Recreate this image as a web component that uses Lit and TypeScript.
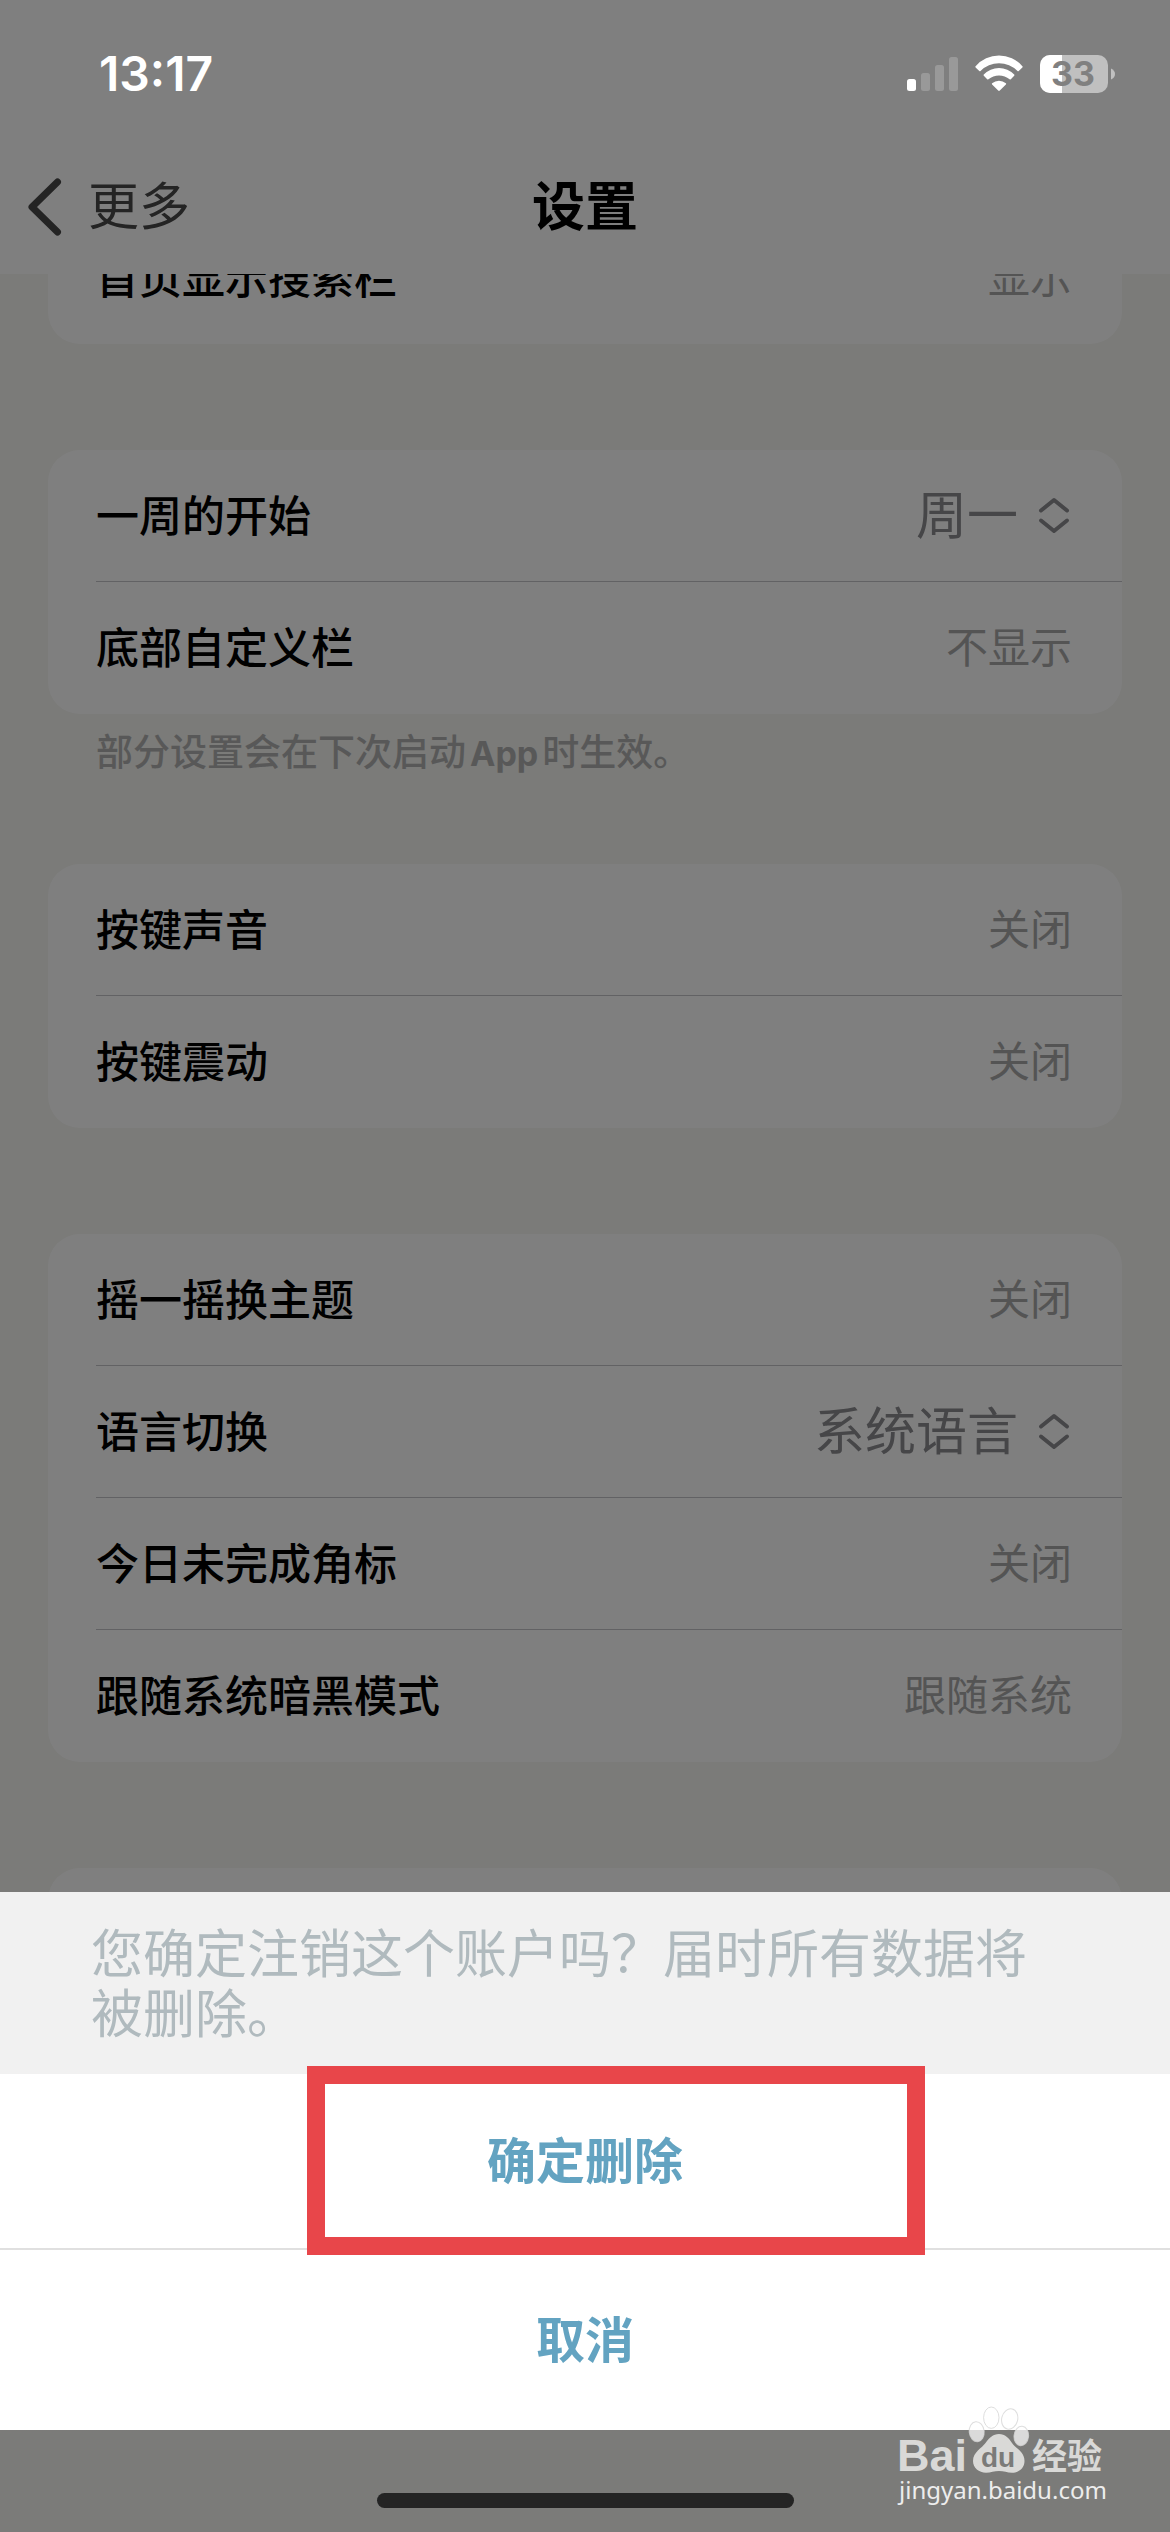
import { LitElement, html, css, svg, nothing } from "lit";
import { customElement, property } from "lit/decorators.js";

interface SettingRow {
  id: string;
  label: string;
  value: string;
  options?: string[];
}

interface SettingGroup {
  rows: SettingRow[];
  note?: boolean;
}

const groups: SettingGroup[] = [
  { rows: [{ id: "search", label: "首页显示搜索栏", value: "显示" }] },
  {
    rows: [
      { id: "week", label: "一周的开始", value: "周一", options: ["周一", "周日"] },
      { id: "bottom", label: "底部自定义栏", value: "不显示" },
    ],
    note: true,
  },
  {
    rows: [
      { id: "sound", label: "按键声音", value: "关闭" },
      { id: "haptic", label: "按键震动", value: "关闭" },
    ],
  },
  {
    rows: [
      { id: "shake", label: "摇一摇换主题", value: "关闭" },
      { id: "lang", label: "语言切换", value: "系统语言", options: ["系统语言"] },
      { id: "badge", label: "今日未完成角标", value: "关闭" },
      { id: "dark", label: "跟随系统暗黑模式", value: "跟随系统" },
    ],
  },
];

const fontStack = css`"Inter", "Noto Sans CJK SC", sans-serif`;

@customElement("status-bar")
export class StatusBar extends LitElement {
  static styles = css`
    :host {
      display: flex;
      align-items: center;
      justify-content: space-between;
      height: 148px;
      padding: 0 54px 0 99px;
      color: #fff;
    }
    .time {
      font: 600 48px/56px ${fontStack};
    }
    .icons {
      display: flex;
      align-items: center;
      gap: 17px;
    }
    svg {
      display: block;
      overflow: visible;
    }
    .level {
      font: 700 34px ${fontStack};
      fill: #808080;
    }
  `;

  render() {
    return html`
      <span class="time">13:17</span>
      <span class="icons">
        <svg width="51" height="34" viewBox="0 0 51 34" fill="#fff" aria-hidden="true">
          <rect x="0" y="22" width="9" height="12" rx="2.5" />
          <g opacity="0.2">
            <rect x="14" y="16" width="9" height="18" rx="2.5" />
            <rect x="28" y="8" width="9" height="26" rx="2.5" />
            <rect x="42" y="0" width="9" height="34" rx="2.5" />
          </g>
        </svg>
        <svg width="48" height="38" viewBox="0 0 48 38" fill="#fff" aria-hidden="true">
          <path d="M.6 11.2A31 31 0 0 1 47.4 11.2q.6.6 0 1.2L43.7 16q-.6.6-1.2 0A26 26 0 0 0 5.5 16q-.6.6-1.2 0L.6 12.4q-.6-.6 0-1.2z" />
          <path d="M8.8 19.6A21 21 0 0 1 39.2 19.6q.6.6 0 1.2L35.8 24.3q-.6.6-1.2 0A16.6 16.6 0 0 0 13.4 24.3q-.6.6-1.2 0L8.8 20.8q-.6-.6 0-1.2z" />
          <path d="M17.1 28.3A10.4 10.4 0 0 1 30.9 28.3q.6.6 0 1.2L24.8 35.6q-.8.7-1.6 0L17.1 29.5q-.6-.6 0-1.2z" />
        </svg>
        <svg width="76" height="38" viewBox="0 0 76 38" aria-hidden="true">
          <defs>
            <clipPath id="cell"><rect width="68" height="38" rx="10" /></clipPath>
          </defs>
          <g clip-path="url(#cell)">
            <rect width="68" height="38" fill="#c0c0c0" />
            <rect width="22" height="38" fill="#fff" />
          </g>
          <path d="M71 13.5q4 2 4 5.500t-4 5.500z" fill="#c0c0c0" />
          <text class="level" x="33" y="31" text-anchor="middle">33</text>
        </svg>
      </span>
    `;
  }
}

@customElement("setting-row")
export class SettingRowElement extends LitElement {
  @property({ attribute: false }) row!: SettingRow;

  static styles = css`
    :host {
      display: block;
      padding-left: 48px;
    }
    .row {
      box-sizing: border-box;
      display: flex;
      align-items: center;
      justify-content: space-between;
      width: 100%;
      height: 132px;
      padding: 0 50px 0 0;
      border: 0;
      border-bottom: 1px solid var(--separator, #c4c4c8);
      background: none;
      color: #000;
      font: 500 43px/60px ${fontStack};
    }
    .value {
      font-size: 42px;
      font-weight: 400;
      color: #a8a8a8;
    }
    .picker {
      display: flex;
      align-items: center;
      gap: 18px;
    }
    select {
      appearance: none;
      field-sizing: content;
      margin: 0;
      padding: 0;
      border: 0;
      background: none;
      color: #8c8c90;
      font: 400 51px/70px ${fontStack};
    }
  `;

  render() {
    const { id, label, value, options } = this.row;
    if (!options) {
      return html`<button class="row" type="button">
        <span>${label}</span><span class="value">${value}</span>
      </button>`;
    }
    return html`<div class="row">
      <label for=${id}>${label}</label>
      <span class="picker">
        <select id=${id}>
          ${options.map((o) => html`<option ?selected=${o === value}>${o}</option>`)}
        </select>
        <svg width="36" height="38" viewBox="0 0 36 38" fill="none" stroke="#8c8c90"
          stroke-width="4" stroke-linecap="round" stroke-linejoin="round" aria-hidden="true">
          <path d="M5 13.500L18 3L31 13.500" />
          <path d="M5 23.500L18 34L31 23.500" />
        </svg>
      </span>
    </div>`;
  }
}

@customElement("source-mark")
export class SourceMark extends LitElement {
  static styles = css`
    :host {
      display: block;
    }
    svg {
      display: block;
    }
    .latin {
      font: 700 45px "Liberation Sans", sans-serif;
    }
    .du {
      font: 700 28px "Liberation Sans", sans-serif;
      fill: #7b7b79;
    }
    .han {
      font: 700 35px "Noto Sans CJK SC", sans-serif;
    }
    .url {
      font: 400 24px "Noto Sans", sans-serif;
      fill: #ededed;
    }
  `;

  render() {
    const toes = [
      [86.7, 31.7, 7.5, 10, -6],
      [101.3, 17.7, 7.7, 10.7, 0],
      [119.7, 19, 8, 10.3, 14],
      [131.3, 36, 7.3, 9.7, 6],
    ];
    return html`<svg width="220" height="110" viewBox="0 0 220 110" fill="#d9d9d7">
      ${toes.map(
        ([x, y, rx, ry, a]) => svg`<ellipse cx=${x} cy=${y} rx=${rx} ry=${ry}
          transform="rotate(${a} ${x} ${y})" fill="#fff" fill-opacity="0.72"
          stroke="#d4d4d4" stroke-opacity="0.8" stroke-width="1" />`,
      )}
      <path d="M109 34C115 34 119 38 122 43C125 48 134.500 51 134.500 61C134.500 68 129 72.700 122 72.700C117 72.700 114 71 109 71C104 71 101 72.700 96 72.700C89 72.700 83 68 83 61C83 52 92 48 95.500 43C99 38 103 34 109 34Z" />
      <text class="latin" x="7" y="71">Bai</text>
      <text class="du" x="91" y="67">du</text>
      <text class="han" x="142" y="69">经验</text>
      <text class="url" x="9" y="99">jingyan.baidu.com</text>
    </svg>`;
  }
}

@customElement("app-root")
export class AppRoot extends LitElement {
  static styles = css`
    :host {
      display: block;
      font-family: ${fontStack};
    }
    .screen {
      position: relative;
      min-height: 100vh;
      overflow: hidden;
      background: #f6f6f2;
    }
    header {
      padding-bottom: 8px;
      background: #fff;
    }
    status-bar {
      position: relative;
      z-index: 2;
    }
    nav {
      display: grid;
      grid-template-columns: 1fr auto 1fr;
      align-items: center;
      height: 118px;
      padding: 0 26px;
    }
    .back {
      justify-self: start;
      display: flex;
      align-items: center;
      gap: 24px;
      padding: 0;
      border: 0;
      background: none;
      color: #484848;
      font: 400 51px/70px ${fontStack};
    }
    h1 {
      margin: 0;
      color: #000;
      font: 700 53px/70px ${fontStack};
    }
    main {
      padding: 0 48px;
      overflow: hidden;
    }
    /* The list is scrolled, so the first card starts beneath the header. */
    .list {
      display: flex;
      flex-direction: column;
      gap: 106px;
      margin-top: -62px;
    }
    .card {
      border-radius: 32px;
      background: #fff;
      overflow: hidden;
    }
    .card setting-row:last-child {
      --separator: transparent;
    }
    .rest {
      height: 264px;
    }
    .note {
      margin: 14px 0 -20px;
      padding-left: 48px;
      color: #b0b0b0;
      font: 500 37px/50px ${fontStack};
    }
    .name {
      padding: 0 4px;
      font-size: 34px;
      font-weight: 700;
      line-height: 34px;
    }
    .scrim {
      position: absolute;
      inset: 0;
      display: flex;
      flex-direction: column;
      justify-content: flex-end;
      background: rgba(0, 0, 0, 0.5);
    }
    .sheet {
      position: relative;
      display: flex;
      flex-direction: column;
      background: #fff;
    }
    .message {
      margin: 0;
      padding: 33px 120px 29px 91px;
      background: #f1f1f1;
      color: #b0babe;
      font: 400 52px/60px ${fontStack};
    }
    .action {
      box-sizing: border-box;
      height: 180px;
      padding: 2px 0 0;
      border: 0;
      background: none;
      color: #63a3c1;
      font: 700 49px/68px ${fontStack};
    }
    .confirm {
      height: 176px;
      border-bottom: 2px solid #e0e0e0;
    }
    .highlight {
      position: absolute;
      top: 174px;
      left: 307px;
      box-sizing: border-box;
      width: 618px;
      height: 189px;
      border: 18px solid #e8464a;
      pointer-events: none;
    }
    .bottom {
      display: flex;
      flex-direction: column;
      align-items: center;
      justify-content: flex-end;
      height: 102px;
      padding-bottom: 24px;
      box-sizing: border-box;
    }
    .indicator {
      width: 417px;
      height: 15px;
      border-radius: 8px;
      background: #242424;
    }
    source-mark {
      position: absolute;
      right: 60px;
      bottom: 22px;
    }
  `;

  render() {
    return html`
      <div class="screen">
        <header>
          <status-bar></status-bar>
          <nav>
            <button class="back" type="button">
              <svg width="38" height="60" viewBox="0 0 38 60" fill="none" stroke="currentColor"
                stroke-width="7" stroke-linecap="round" stroke-linejoin="round" aria-hidden="true">
                <path d="M31.500 5L6 30L31.500 55" />
              </svg>
              更多
            </button>
            <h1>设置</h1>
          </nav>
        </header>
        <main>
          <div class="list">
            ${groups.map(
              (g) => html`<section>
                <div class="card">
                  ${g.rows.map((r) => html`<setting-row .row=${r}></setting-row>`)}
                </div>
                ${g.note
                  ? html`<p class="note">部分设置会在下次启动<span class="name">App</span>时生效。</p>`
                  : nothing}
              </section>`,
            )}
            <section class="card rest"></section>
          </div>
        </main>
        <div class="scrim">
          <div class="sheet" role="dialog" aria-labelledby="message">
            <p class="message" id="message">您确定注销这个账户吗？届时所有数据将被删除。</p>
            <button class="action confirm" type="button">确定删除</button>
            <button class="action" type="button">取消</button>
            <div class="highlight"></div>
          </div>
          <div class="bottom"><div class="indicator"></div></div>
          <source-mark></source-mark>
        </div>
      </div>
    `;
  }
}
